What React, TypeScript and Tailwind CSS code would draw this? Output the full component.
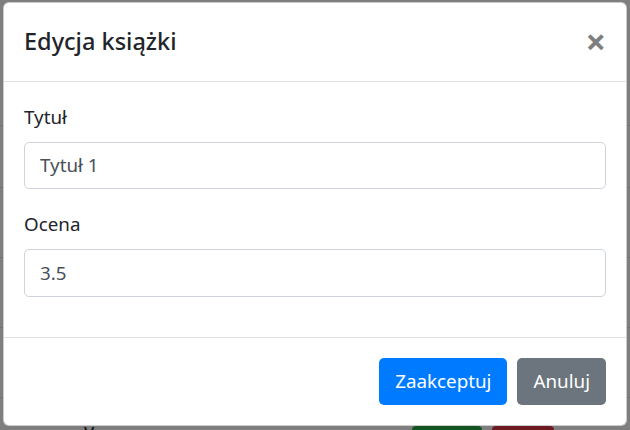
import { ReactNode } from 'react'

const rows = [125, 187, 257, 327, 397]

const Field = ({ label, value }: { label: string; value: string }) => (
  <div className="mb-[20px]">
    <label className="mb-[10px] block text-[18.8px] leading-[30px] text-[#212529]">
      {label}
    </label>
    <input
      readOnly
      defaultValue={value}
      className="block h-[47.5px] w-full rounded-[5px] border border-[#ced4da] bg-white px-[15px] py-[7.5px] text-[18.8px] leading-[30px] text-[#495057] outline-none"
    />
  </div>
)

const Btn = ({ children, className }: { children: ReactNode; className: string }) => (
  <button
    className={`m-[5px] rounded-[5px] border border-transparent px-[15px] py-[7.5px] text-[18.8px] leading-[30px] text-white ${className}`}
  >
    {children}
  </button>
)

export default function App() {
  return (
    <div
      className="relative h-[430px] w-[630px] overflow-hidden bg-white"
      style={{ fontFamily: '"Noto Sans", "Open Sans", sans-serif' }}
    >
      {/* page behind the modal */}
      <div className="flex flex-col">
        {rows.map((y, i) => (
          <div
            key={y}
            className="w-full border-t border-[#dee2e6]"
            style={{ marginTop: i === 0 ? y : y - rows[i - 1] - 1 }}
          />
        ))}
        <div className="flex items-start pl-[84px] pt-[18px]">
          <span className="text-[20px] leading-[30px] text-[#212529]">y</span>
          <div className="ml-[318px] mt-[10px] flex gap-[10px]">
            <div className="h-[40px] w-[70px] rounded-[4px] bg-[#28a745]" />
            <div className="h-[40px] w-[62px] rounded-[4px] bg-[#dc3545]" />
          </div>
        </div>
      </div>

      <div className="absolute inset-0 bg-black/50" />

      <div className="absolute left-[3px] top-[2px] w-[624px] rounded-[6px] border border-black/20 bg-white">
        <div className="flex items-start justify-between border-b border-[#dee2e6] p-[20px]">
          <h5 className="text-[23.5px] font-medium leading-[37.5px] text-[#212529]">
            Edycja książki
          </h5>
          <button className="-my-[20px] -mr-[20px] py-[20px] pl-[20px] pr-[20px] text-[36px] font-bold leading-[37.5px] text-black opacity-50">
            ×
          </button>
        </div>
        <div className="p-[20px]">
          <Field label="Tytuł" value="Tytuł 1" />
          <Field label="Ocena" value="3.5" />
        </div>
        <div className="flex items-center justify-end border-t border-[#dee2e6] p-[15px]">
          <Btn className="bg-[#007bff]">Zaakceptuj</Btn>
          <Btn className="bg-[#6c757d]">Anuluj</Btn>
        </div>
      </div>
    </div>
  )
}
